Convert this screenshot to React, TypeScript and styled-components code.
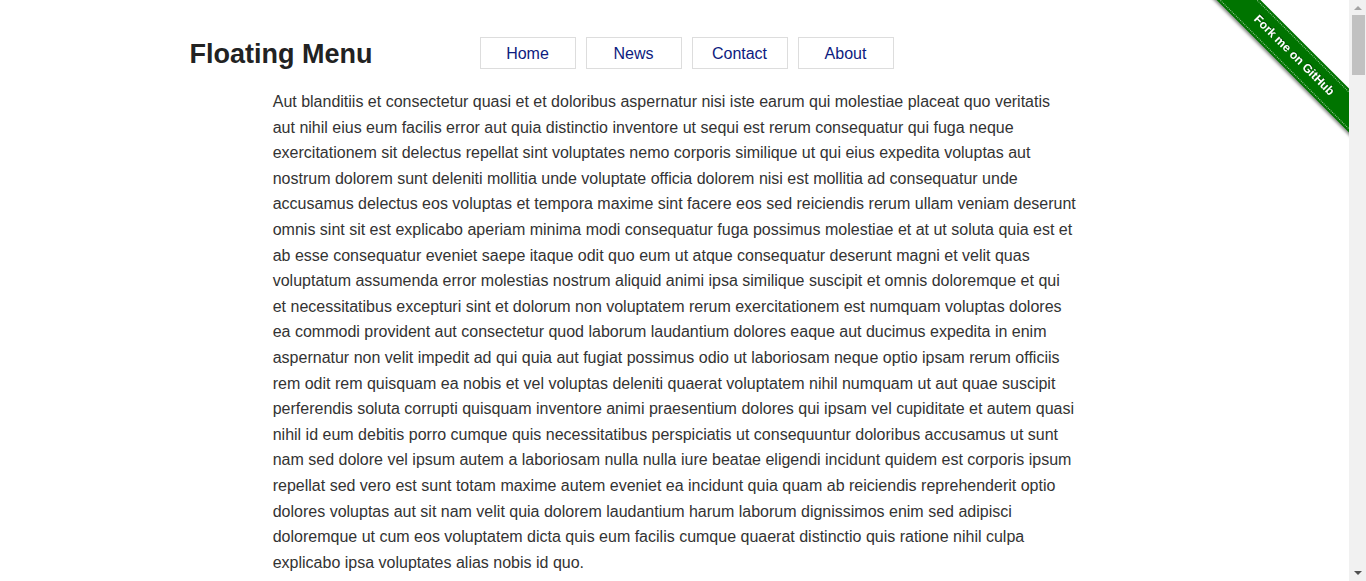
import { FunctionComponent } from "react";
import styled, { createGlobalStyle } from "styled-components";

const GlobalStyle = createGlobalStyle`
  html, body {
    margin: 0;
    padding: 0;
    background: #fff;
  }

  body {
    font-family: "Liberation Sans", Arial, sans-serif;
    color: #333;
  }
`;

const SCROLLBAR = 17;

const navItems = ["Home", "News", "Contact", "About"];

const mainText =
  "Aut blanditiis et consectetur quasi et et doloribus aspernatur nisi iste earum qui molestiae placeat quo veritatis aut nihil eius eum facilis error aut quia distinctio inventore ut sequi est rerum consequatur qui fuga neque exercitationem sit delectus repellat sint voluptates nemo corporis similique ut qui eius expedita voluptas aut nostrum dolorem sunt deleniti mollitia unde voluptate officia dolorem nisi est mollitia ad consequatur unde accusamus delectus eos voluptas et tempora maxime sint facere eos sed reiciendis rerum ullam veniam deserunt omnis sint sit est explicabo aperiam minima modi consequatur fuga possimus molestiae et at ut soluta quia est et ab esse consequatur eveniet saepe itaque odit quo eum ut atque consequatur deserunt magni et velit quas voluptatum assumenda error molestias nostrum aliquid animi ipsa similique suscipit et omnis doloremque et qui et necessitatibus excepturi sint et dolorum non voluptatem rerum exercitationem est numquam voluptas dolores ea commodi provident aut consectetur quod laborum laudantium dolores eaque aut ducimus expedita in enim aspernatur non velit impedit ad qui quia aut fugiat possimus odio ut laboriosam neque optio ipsam rerum officiis rem odit rem quisquam ea nobis et vel voluptas deleniti quaerat voluptatem nihil numquam ut aut quae suscipit perferendis soluta corrupti quisquam inventore animi praesentium dolores qui ipsam vel cupiditate et autem quasi nihil id eum debitis porro cumque quis necessitatibus perspiciatis ut consequuntur doloribus accusamus ut sunt nam sed dolore vel ipsum autem a laboriosam nulla nulla iure beatae eligendi incidunt quidem est corporis ipsum repellat sed vero est sunt totam maxime autem eveniet ea incidunt quia quam ab reiciendis reprehenderit optio dolores voluptas aut sit nam velit quia dolorem laudantium harum laborum dignissimos enim sed adipisci doloremque ut cum eos voluptatem dicta quis eum facilis cumque quaerat distinctio quis ratione nihil culpa explicabo ipsa voluptates alias nobis id quo.";

const App: FunctionComponent = () => {
  return (
    <>
      <GlobalStyle />
      <Page>
        <Header>
          <Title>Floating Menu</Title>
          <Nav>
            {navItems.map((item) => (
              <NavLink key={item} href="#">
                {item}
              </NavLink>
            ))}
          </Nav>
        </Header>
        <Content>
          <Paragraph>{mainText}</Paragraph>
        </Content>
      </Page>
      <RibbonWrapper>
        <Ribbon>
          <RibbonLink href="#">Fork me on GitHub</RibbonLink>
        </Ribbon>
      </RibbonWrapper>
      <ScrollTrack>
        <ArrowUp />
        <Thumb />
        <ArrowDown />
      </ScrollTrack>
    </>
  );
};

export default App;

const Page = styled.div`
  margin-right: ${SCROLLBAR}px;
`;

const Header = styled.header`
  display: flex;
  align-items: center;
  width: 970px;
  height: 32px;
  margin: 0 auto;
  padding-top: 37px;
`;

const Title = styled.h1`
  width: 290px;
  margin: 0 0 -1px;
  padding-top: 1px;
  font-size: 27px;
  font-weight: 700;
  color: #222;
  line-height: 32px;
`;

const Nav = styled.nav`
  display: flex;
  gap: 10px;
`;

const NavLink = styled.a`
  display: flex;
  align-items: center;
  justify-content: center;
  box-sizing: border-box;
  width: 96px;
  height: 32px;
  padding-top: 2px;
  border: 1px solid #ddd;
  background: #fff;
  color: #0d1b80;
  font-size: 16px;
  text-decoration: none;
`;

const Content = styled.main`
  width: 803.6px;
  margin: 19px auto 0;
`;

const Paragraph = styled.p`
  margin: 0;
  padding-top: 1px;
  font-size: 16px;
  line-height: 1.6;
  color: #333;
`;

const RibbonWrapper = styled.div`
  position: fixed;
  top: 0;
  right: ${SCROLLBAR}px;
  width: 150px;
  height: 150px;
  overflow: hidden;
  pointer-events: none;
`;

const Ribbon = styled.div`
  position: absolute;
  top: 40px;
  right: -45px;
  padding: 2px 0;
  background-color: #007400;
  box-shadow: 0 2px 3px 0 rgba(0, 0, 0, 0.45);
  transform: rotate(45deg);
  line-height: 0;
`;

const RibbonLink = styled.a`
  display: inline-block;
  width: 200px;
  padding: 2px 0;
  border-width: 1px 0;
  border-style: dotted;
  border-color: rgba(255, 255, 255, 0.6);
  color: #fff;
  font-family: "Liberation Sans", Arial, sans-serif;
  font-size: 12px;
  font-weight: 700;
  line-height: 21px;
  text-align: center;
  text-decoration: none;
  text-shadow: 0 -1px rgba(0, 0, 0, 0.4);
  vertical-align: top;
`;

const ScrollTrack = styled.div`
  position: fixed;
  top: 0;
  right: 0;
  bottom: 0;
  width: ${SCROLLBAR}px;
  display: flex;
  flex-direction: column;
  align-items: center;
  background: #f1f1f1;
`;

const ArrowUp = styled.div`
  width: 0;
  height: 0;
  margin: 6px 0 4px;
  border-left: 4px solid transparent;
  border-right: 4px solid transparent;
  border-bottom: 4px solid #a3a3a3;
`;

const Thumb = styled.div`
  width: 13px;
  height: 60px;
  margin-left: 2px;
  margin-top: 1px;
  background: #c1c1c1;
`;

const ArrowDown = styled.div`
  width: 0;
  height: 0;
  margin: auto 0 6px;
  border-left: 4px solid transparent;
  border-right: 4px solid transparent;
  border-top: 4px solid #505050;
`;
